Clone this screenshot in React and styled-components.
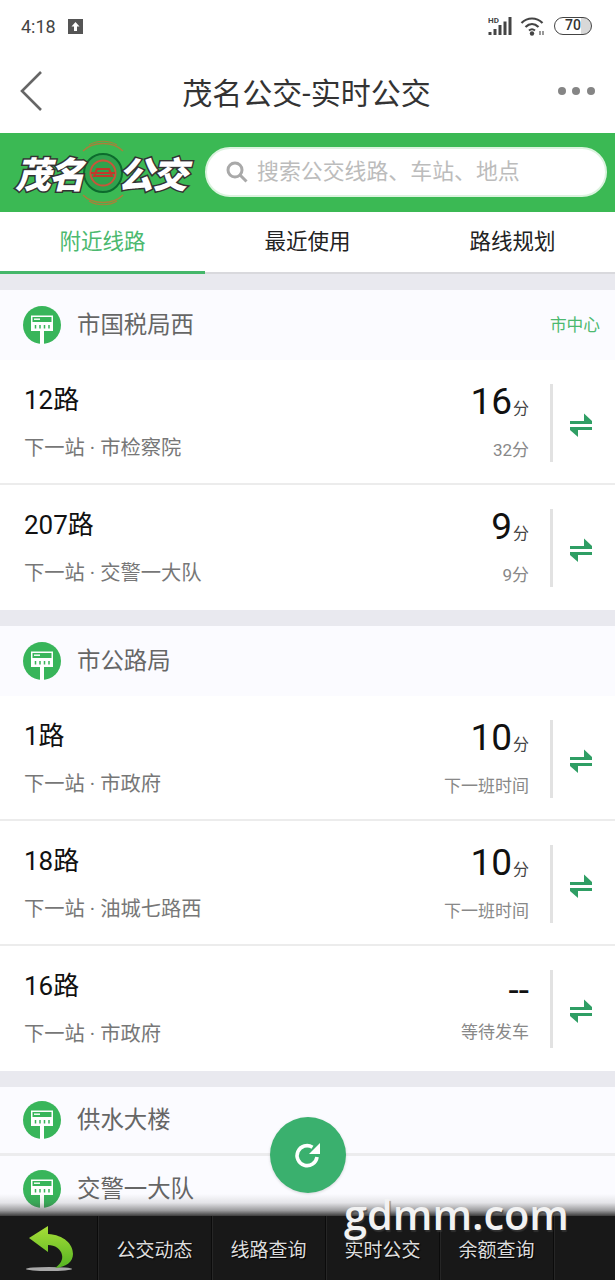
import React from "react";
import styled, { createGlobalStyle } from "styled-components";

const cjk = `Roboto, "Noto Sans CJK SC", sans-serif`;

const GlobalStyle = createGlobalStyle`
  html, body { margin: 0; padding: 0; background: #fff; }
  body { font-family: ${cjk}; }
  * { box-sizing: border-box; }
`;

const stations = [
  {
    name: "市国税局西",
    area: "市中心",
    routes: [
      { name: "12路", next: "市检察院", time: "16", note: "32分" },
      { name: "207路", next: "交警一大队", time: "9", note: "9分" },
    ],
  },
  {
    name: "市公路局",
    routes: [
      { name: "1路", next: "市政府", time: "10", note: "下一班时间" },
      { name: "18路", next: "油城七路西", time: "10", note: "下一班时间" },
      { name: "16路", next: "市政府", time: "--", note: "等待发车" },
    ],
  },
];

const Page = styled.div`
  position: relative;
  width: 615px;
  height: 1280px;
  overflow: hidden;
  display: flex;
  flex-direction: column;
  background: #fff;
`;

const StatusBar = styled.div`
  height: 56px;
  padding: 0 21px 4px 21px;
  display: flex;
  align-items: center;
  justify-content: space-between;
  color: #444;
`;

const StatusGroup = styled.div`
  display: flex;
  align-items: center;
  gap: ${(p) => p.$gap || 12}px;
`;

const Clock = styled.span`
  font-size: 18px;
`;

const Battery = styled.div`
  width: 38px;
  height: 18px;
  border: 1.5px solid #444;
  border-radius: 9px;
  font-size: 14px;
  line-height: 15px;
  text-align: center;
  font-weight: 500;
  color: #333;
  margin-right: 2px;
  background: linear-gradient(90deg, #fff 72%, #d8d8d8 72%);
`;

const TitleBar = styled.div`
  height: 77px;
  padding: 0 20px 7px 19px;
  display: flex;
  align-items: center;
  justify-content: space-between;
`;

const Title = styled.h1`
  margin: 0 0 0 10px;
  font-size: 30px;
  font-weight: 400;
  color: #333;
`;

const Dots = styled.div`
  display: flex;
  gap: 6.5px;
  span {
    width: 8px;
    height: 8px;
    border-radius: 50%;
    background: #858585;
  }
`;

const Banner = styled.div`
  height: 79px;
  background: #3bb954;
  display: flex;
  align-items: center;
  padding: 0 8px 0 15px;
`;

const Logo = styled.div`
  position: relative;
  width: 190px;
  height: 79px;
  flex: none;
  display: flex;
  align-items: center;
  justify-content: space-between;
  padding-right: 19px;
`;

const LogoText = styled.span`
  position: relative;
  z-index: 1;
  font-family: "Noto Sans CJK SC", sans-serif;
  font-size: 36px;
  font-weight: 900;
  font-style: italic;
  letter-spacing: -2px;
  color: #fff;
  -webkit-text-stroke: 3px #333;
  paint-order: stroke fill;
  margin-bottom: 2px;
`;

const LogoMark = styled.svg`
  position: absolute;
  left: 56px;
  top: 6px;
`;

const Search = styled.div`
  flex: 1;
  height: 50px;
  border-radius: 25px;
  background: #fff;
  border: 2px solid #dcf3df;
  margin-bottom: 2px;
  display: flex;
  align-items: center;
  padding: 0 0 4px 19px;
  gap: 9px;
  font-size: 21.9px;
  color: #bcbcbc;
  white-space: nowrap;
  svg {
    margin-top: 4px;
  }
`;

const Tabs = styled.div`
  display: flex;
  height: 62px;
  border-bottom: 2px solid #d9d9dd;
`;

const Tab = styled.div`
  position: relative;
  flex: 1;
  display: flex;
  align-items: center;
  justify-content: center;
  padding-bottom: 6px;
  font-size: 21.5px;
  color: ${(p) => (p.$active ? "#4cb96f" : "#222")};
  &::after {
    content: "";
    position: absolute;
    left: 0;
    right: 0;
    bottom: -2px;
    height: 3px;
    background: ${(p) => (p.$active ? "#45b76a" : "transparent")};
  }
`;

const Content = styled.div`
  flex: 1;
  min-height: 0;
  overflow: hidden;
  background: #e9e9ef;
  padding-top: 16px;
`;

const Section = styled.section`
  background: #fff;
  margin-bottom: 16px;
`;

const StationHead = styled.div`
  height: ${(p) => p.$height || 70}px;
  padding: 0 15px 0 23px;
  background: #fbfbff;
  display: flex;
  align-items: center;
  gap: 16px;
  border-bottom: ${(p) => (p.$line ? "3px solid #ececee" : "none")};
`;

const StationName = styled.span`
  flex: 1;
  padding-bottom: 5px;
  font-size: 23.4px;
  color: #666;
`;

const Area = styled.span`
  padding-bottom: 3px;
  font-size: 16.7px;
  color: #4cb96f;
`;

const Row = styled.div`
  height: 125px;
  display: flex;
  align-items: center;
  box-shadow: ${(p) => (p.$last ? "none" : "inset 0 -2px 0 #ececec")};
`;

const RouteInfo = styled.div`
  flex: 1;
  padding: 0 0 2px 24px;
`;

const RouteName = styled.div`
  font-size: 26px;
  line-height: 36px;
  color: #111;
`;

const NextStop = styled.div`
  margin-top: 16px;
  font-size: 20.3px;
  line-height: 28px;
  color: #777;
`;

const Times = styled.div`
  text-align: right;
  padding-bottom: 2px;
`;

const Minutes = styled.div`
  font-size: 37px;
  line-height: 40px;
  color: #111;
  small {
    font-size: 16px;
    color: #444;
    margin-left: 1px;
  }
`;

const Note = styled.div`
  margin-top: 9px;
  font-size: 17px;
  line-height: 24px;
  color: #888;
`;

const Split = styled.div`
  width: 3px;
  height: 78px;
  background: #e2e2e2;
  margin-left: 21px;
`;

const SwapCell = styled.div`
  width: 62px;
  padding: 5px 6px 0 0;
  display: flex;
  justify-content: center;
`;

const Fab = styled.div`
  position: absolute;
  left: 270px;
  top: 1117px;
  width: 76px;
  height: 76px;
  border-radius: 50%;
  background: #3ab06e;
  display: flex;
  align-items: center;
  justify-content: center;
  box-shadow: 0 1px 3px rgba(0, 0, 0, 0.15);
`;

const BottomBar = styled.div`
  position: relative;
  height: 64px;
  flex: none;
  display: flex;
  background: #181818;
  &::before {
    content: "";
    position: absolute;
    left: 0;
    right: 0;
    top: -22px;
    height: 22px;
    background: linear-gradient(
      rgba(60, 60, 60, 0),
      rgba(60, 60, 60, 0.12) 40%,
      rgba(60, 60, 60, 0.5) 75%,
      rgba(50, 50, 50, 0.95)
    );
  }
`;

const BarCell = styled.div`
  width: ${(p) => p.$width || 114}px;
  flex: none;
  display: flex;
  align-items: center;
  justify-content: center;
  border-right: 1px solid #0b0b0b;
  box-shadow: 1px 0 0 #262626;
  font-size: 19px;
  color: #ddd;
  text-shadow: 1px 1px 1px #000;
`;

const Watermark = styled.div`
  position: absolute;
  left: 344px;
  top: 1194px;
  font-family: "Open Sans", sans-serif;
  font-size: 41.5px;
  font-weight: 600;
  line-height: 40px;
  color: #f2f2f2;
  text-shadow: 1px 2px 1px rgba(60, 60, 60, 0.7);
`;

const BackIcon = () => (
  <svg width="26" height="44" viewBox="0 0 26 44" fill="none">
    <path d="M22 3 L3 22 L22 41" stroke="#666" strokeWidth="2.6" />
  </svg>
);

const UploadIcon = () => (
  <svg width="15" height="15" viewBox="0 0 15 15">
    <rect width="15" height="15" fill="#555" />
    <path d="M7.5 3 L11.5 7.5 H9 V12 H6 V7.5 H3.5 Z" fill="#fff" />
  </svg>
);

const SignalIcon = () => (
  <svg width="24" height="20" viewBox="0 0 24 20">
    <text x="0" y="7" fontSize="8" fontWeight="700" fill="#444" fontFamily="Roboto, sans-serif">HD</text>
    <path d="M0.5 16h3v3h-3zM5.5 13h3v6h-3zM10.5 9h3v10h-3zM15.5 5.5h3V19h-3zM20.5 1h3v18h-3z" fill="#444" />
  </svg>
);

const WifiIcon = () => (
  <svg width="26" height="20" viewBox="0 0 26 20" fill="none">
    <path d="M1.5 7 C7.5 1 16.5 1 22.5 7" stroke="#444" strokeWidth="2.2" />
    <path d="M5.5 11 C9.5 7 14.5 7 18.5 11" stroke="#444" strokeWidth="2.2" />
    <path d="M9 14.5 C11 12.8 13 12.8 15 14.5" stroke="#444" strokeWidth="2" />
    <circle cx="12" cy="17.5" r="2.2" fill="#444" />
    <path d="M20 15v4M23 15v4" stroke="#555" strokeWidth="1.2" />
  </svg>
);

const StationIcon = () => (
  <svg width="38" height="38" viewBox="0 0 38 38" style={{ flex: "none" }}>
    <circle cx="19" cy="19" r="19" fill="#38b55a" />
    <path d="M8 9.5H30V25H21V38H17V25H8Z" fill="#fff" />
    <rect x="9.5" y="11" width="19" height="5" fill="#38b55a" />
    <rect x="11" y="12.5" width="6" height="1.4" fill="#fff" />
    <path d="M12.5 19v3.5M17 19v3.5M21.5 19v3.5M26 19v3.5" stroke="#38b55a" strokeWidth="1.5" />
  </svg>
);

const SwapIcon = () => (
  <svg width="24" height="24" viewBox="0 0 24 24" fill="#2f9e64">
    <path d="M1 8 H23 V11 H1 Z" />
    <path d="M15 0.5 L23 8 V9 H15 Z" />
    <path d="M1 14 H23 V17 H1 Z" />
    <path d="M1 16 V17 L9 24 V16 Z" />
  </svg>
);

const RefreshIcon = () => (
  <svg width="28" height="28" viewBox="0 0 28 28" fill="none">
    <path d="M23 16 A10 10 0 1 1 18.5 6.2" stroke="#fff" strokeWidth="3.6" />
    <path d="M15 13 H26 V2 Z" fill="#fff" />
  </svg>
);

const ReturnIcon = () => (
  <svg width="50" height="52" viewBox="0 0 50 52">
    <defs>
      <linearGradient id="returnGreen" x1="0" y1="0" x2="0" y2="1">
        <stop offset="0" stopColor="#a8de38" />
        <stop offset="1" stopColor="#55b322" />
      </linearGradient>
    </defs>
    <ellipse cx="25" cy="47" rx="23" ry="2" fill="#a8a8a8" />
    <path
      d="M5 16 L24 4 L24 12 C40 13 49 22 49 32 C49 40 42 45 31 46 C37 42 39 37 38 33 C37 27 31 23 24 23 L24 30 Z"
      fill="url(#returnGreen)"
    />
  </svg>
);

const LogoSeal = () => (
  <LogoMark width="64" height="68" viewBox="0 0 64 68" fill="none">
    <path d="M12 12 C22 2 42 2 52 12" stroke="#a8803a" strokeWidth="1.5" />
    <path d="M18 6 C26 1 38 1 46 6" stroke="#a8803a" strokeWidth="1.2" />
    <path d="M12 56 C22 66 42 66 52 56" stroke="#a8803a" strokeWidth="1.5" />
    <path d="M18 62 C26 67 38 67 46 62" stroke="#a8803a" strokeWidth="1.2" />
    <circle cx="32" cy="34" r="19" fill="#2fa24d" stroke="#0c6b2d" strokeWidth="2" />
    <circle cx="32" cy="34" r="12.5" stroke="#c8553a" strokeWidth="2" />
    <path d="M20 34 H44 M26 30 H38 L41 37 H23 Z" stroke="#c0392b" strokeWidth="2" />
  </LogoMark>
);

const RouteRow = ({ route, last }) => (
  <Row $last={last}>
    <RouteInfo>
      <RouteName>{route.name}</RouteName>
      <NextStop>下一站 · {route.next}</NextStop>
    </RouteInfo>
    <Times>
      <Minutes>
        {route.time}
        {route.time !== "--" && <small>分</small>}
      </Minutes>
      <Note>{route.note}</Note>
    </Times>
    <Split />
    <SwapCell>
      <SwapIcon />
    </SwapCell>
  </Row>
);

const App = () => {
  return (
    <Page>
      <GlobalStyle />
      <StatusBar>
        <StatusGroup>
          <Clock>4:18</Clock>
          <UploadIcon />
        </StatusGroup>
        <StatusGroup $gap={8}>
          <SignalIcon />
          <WifiIcon />
          <Battery>70</Battery>
        </StatusGroup>
      </StatusBar>

      <TitleBar>
        <BackIcon />
        <Title>茂名公交-实时公交</Title>
        <Dots>
          <span />
          <span />
          <span />
        </Dots>
      </TitleBar>

      <Banner>
        <Logo>
          <LogoText>茂名</LogoText>
          <LogoSeal />
          <LogoText>公交</LogoText>
        </Logo>
        <Search>
          <svg width="22" height="22" viewBox="0 0 22 22" fill="none" stroke="#a9a9a9" strokeWidth="3">
            <circle cx="9" cy="9" r="7" />
            <path d="M14 14 L20.5 20.5" />
          </svg>
          搜索公交线路、车站、地点
        </Search>
      </Banner>

      <Tabs>
        <Tab $active>附近线路</Tab>
        <Tab>最近使用</Tab>
        <Tab>路线规划</Tab>
      </Tabs>

      <Content>
        {stations.map((station) => (
          <Section key={station.name}>
            <StationHead>
              <StationIcon />
              <StationName>{station.name}</StationName>
              {station.area && <Area>{station.area}</Area>}
            </StationHead>
            {station.routes.map((route, i) => (
              <RouteRow
                key={route.name}
                route={route}
                last={i === station.routes.length - 1}
              />
            ))}
          </Section>
        ))}
        <Section>
          <StationHead $height={69} $line>
            <StationIcon />
            <StationName>供水大楼</StationName>
          </StationHead>
          <StationHead $height={66}>
            <StationIcon />
            <StationName>交警一大队</StationName>
          </StationHead>
        </Section>
      </Content>

      <BottomBar>
        <BarCell $width={98}>
          <ReturnIcon />
        </BarCell>
        <BarCell>公交动态</BarCell>
        <BarCell>线路查询</BarCell>
        <BarCell>实时公交</BarCell>
        <BarCell>余额查询</BarCell>
      </BottomBar>

      <Fab>
        <RefreshIcon />
      </Fab>
      <Watermark>gdmm.com</Watermark>
    </Page>
  );
};

export default App;
